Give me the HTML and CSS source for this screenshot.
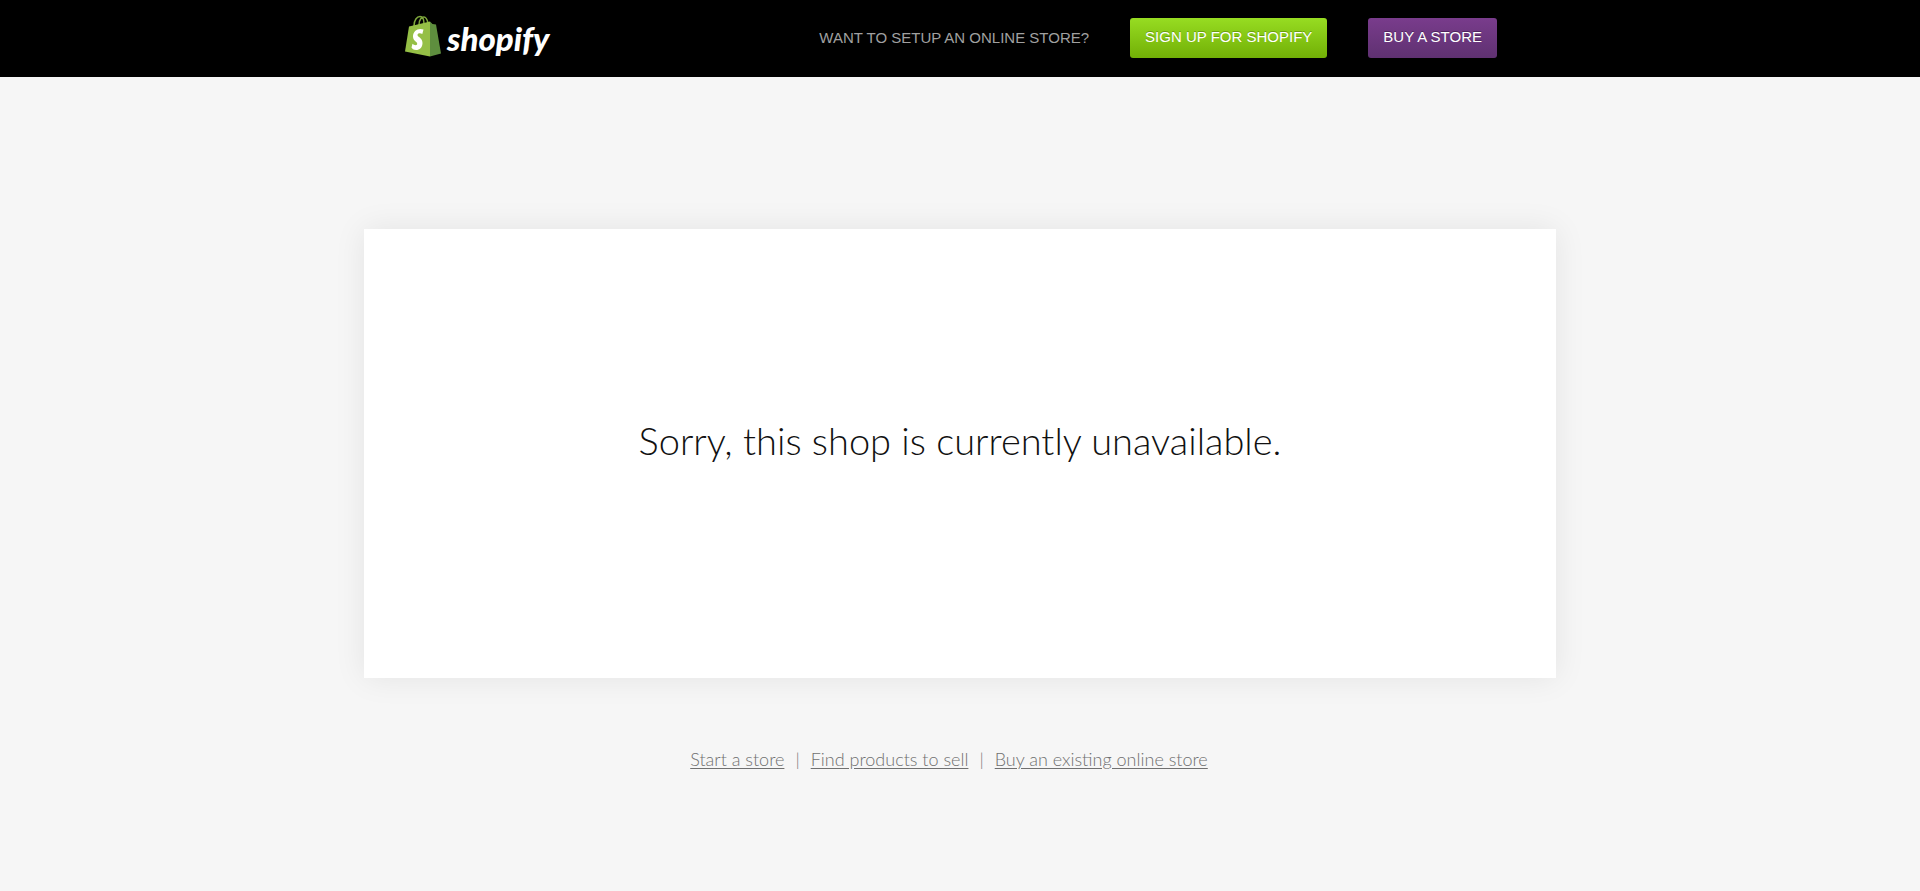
FILE: index.html
```html
<!DOCTYPE html>
<html lang="en">
<head>
<meta charset="utf-8">
<title>Shop unavailable</title>
<meta name="viewport" content="width=device-width, initial-scale=1">
<link rel="stylesheet" href="styles.css">
</head>
<body>
<header class="site-header">
  <div class="header-inner">
    <a class="logo" href="#" aria-label="shopify">
      <svg class="logo-bag" viewBox="0 0 36 42" aria-hidden="true">
        <path d="M9 11C9 5 12 1.500 15 1.500S19 4 19 9M14 10C14 4 17 2 19 2S22 4 23 8" fill="none" stroke="#7fa83c" stroke-width="1.500"/>
        <path d="M4 11.500L25 6.500V41.500L0 36.500Z" fill="#95bf46"/>
        <path d="M25 6.500L27.500 9L31 9.500L36 38.500L25 41.500Z" fill="#5e8e3e"/>
        <path d="M18.500 14.500L17.300 19C15.500 18 12.500 18 12.500 20C12.500 22.300 17.500 22.500 17.500 28C17.500 32.500 14.500 35 11.200 35C8.500 35 7 33.500 6.500 32.500L7.500 28.700C8.500 29.800 12.200 31.300 12.200 28.700C12.200 26.500 8 26 8 21.500C8 16 13 12.500 18.500 14.500Z" fill="#fff"/>
      </svg>
      <span class="logo-word">shopify</span>
    </a>
    <nav class="header-nav">
      <span class="prompt">WANT TO SETUP AN ONLINE STORE?</span>
      <a class="btn btn-green" href="#">SIGN UP FOR SHOPIFY</a>
      <a class="btn btn-purple" href="#">BUY A STORE</a>
    </nav>
  </div>
</header>
<main class="page">
  <section class="card">
    <h1 class="message">Sorry, this shop is currently unavailable.</h1>
  </section>
  <nav class="links">
    <a href="#">Start a store</a>
    <span class="divider">|</span>
    <a href="#">Find products to sell</a>
    <span class="divider">|</span>
    <a href="#">Buy an existing online store</a>
  </nav>
</main>
</body>
</html>
```
FILE: styles.css
```css
* {
  box-sizing: border-box;
}

body {
  margin: 0;
  background: #f6f6f6;
  font-family: Lato, "Open Sans", sans-serif;
}

.site-header {
  background: #000;
}

.header-inner {
  display: flex;
  align-items: flex-start;
  justify-content: space-between;
  max-width: 1110px;
  margin: 0 auto;
  padding: 15px 18px 16px 0;
}

.header-nav {
  display: flex;
  align-items: center;
  gap: 41px;
  padding-top: 3px;
  font: 15px/20px "Liberation Sans", Arial, sans-serif;
}

.logo {
  display: flex;
  gap: 6px;
  color: #fff;
  text-decoration: none;
}

.logo-bag {
  width: 36px;
  height: 42px;
}

.logo-word {
  font: italic 900 33px/46px Lato, "Open Sans", sans-serif;
}

.prompt {
  color: #a0a0a0;
}

.btn {
  height: 40px;
  padding: 0 15px;
  border-radius: 3px;
  color: #fff;
  line-height: 38px;
  text-decoration: none;
  white-space: nowrap;
}

.btn-green {
  background: linear-gradient(#97dc22, #72b006);
  text-shadow: 0 -1px 0 #6a9e10;
}

.btn-purple {
  background: linear-gradient(#793c8c, #5f3171);
  text-shadow: 0 -1px 0 #4d245c;
}

.page {
  padding: 152px 24px 24px;
}

.card {
  display: flex;
  align-items: center;
  justify-content: center;
  max-width: 1192px;
  min-height: 449px;
  margin: 0 auto;
  padding: 24px;
  background: #fff;
  box-shadow: 0 0 30px rgba(0, 0, 0, 0.08);
}

.message {
  margin: 0;
  padding-bottom: 28px;
  color: #111;
  font-size: 38px;
  font-weight: 300;
  line-height: 48px;
  text-align: center;
}

.links {
  display: flex;
  justify-content: center;
  gap: 11px;
  padding: 69px 22px 0 0;
  color: #777;
  font-size: 18px;
  font-weight: 300;
  line-height: 24px;
}

.links a {
  color: #707070;
  text-underline-offset: 2px;
}
```
